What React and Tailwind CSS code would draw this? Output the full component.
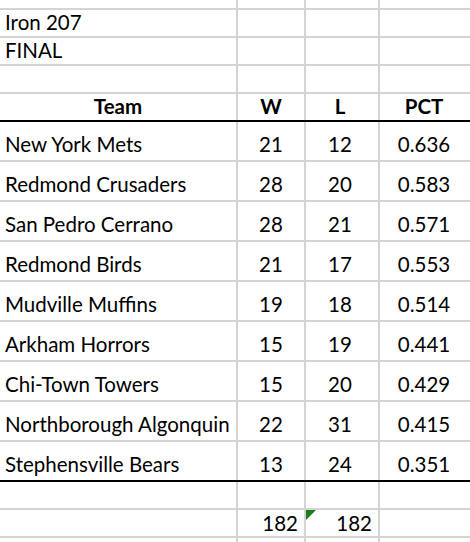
const teams = [
  ["New York Mets", 21, 12, "0.636"],
  ["Redmond Crusaders", 28, 20, "0.583"],
  ["San Pedro Cerrano", 28, 21, "0.571"],
  ["Redmond Birds", 21, 17, "0.553"],
  ["Mudville Muffins", 19, 18, "0.514"],
  ["Arkham Horrors", 15, 19, "0.441"],
  ["Chi-Town Towers", 15, 20, "0.429"],
  ["Northborough Algonquin", 22, 31, "0.415"],
  ["Stephensville Bears", 13, 24, "0.351"],
];

function Row({ h, pad = "pb-[2px]", line = "border-[#d4d4d4]", cells = [] }) {
  const [a, b, c, d] = cells;
  return (
    <div className={`flex border-b-2 ${line} ${h}`}>
      <div className={`w-[238px] shrink-0 border-r-2 border-[#d4d4d4] flex items-center pl-[5px] ${pad}`}>
        {a}
      </div>
      <div className={`w-[68px] shrink-0 border-r-2 border-[#d4d4d4] flex items-center justify-center ${pad}`}>
        {b}
      </div>
      <div className={`w-[74px] shrink-0 border-r-2 border-[#d4d4d4] flex items-center justify-center pr-[4px] ${pad}`}>
        {c}
      </div>
      <div className={`flex-1 flex items-center justify-center pr-[2px] ${pad}`}>{d}</div>
    </div>
  );
}

export default function App() {
  return (
    <div
      className="w-[470px] h-[542px] overflow-hidden bg-white text-black text-[20.5px] leading-none"
      style={{ fontFamily: "Lato, 'Liberation Sans', sans-serif" }}
    >
      <Row h="h-[10px]" pad="" />
      <Row h="h-[28px]" cells={["Iron 207"]} />
      <Row h="h-[28px]" cells={["FINAL"]} />
      <Row h="h-[28px]" />
      <div className="flex border-b-2 border-black h-[28px] font-bold">
        <div className="w-[238px] shrink-0 border-r-2 border-[#d4d4d4] flex items-center justify-center pb-[2px]">
          Team
        </div>
        <div className="w-[68px] shrink-0 border-r-2 border-[#d4d4d4] flex items-center justify-center pb-[2px]">
          W
        </div>
        <div className="w-[74px] shrink-0 border-r-2 border-[#d4d4d4] flex items-center justify-center pr-[4px] pb-[2px]">
          L
        </div>
        <div className="flex-1 flex items-center justify-center pr-[2px] pb-[2px]">PCT</div>
      </div>
      {teams.map((t, i) => (
        <Row
          key={t[0]}
          h="h-[40px]"
          pad="pt-[6px]"
          line={i === teams.length - 1 ? "border-black" : "border-[#d4d4d4]"}
          cells={t}
        />
      ))}
      <Row h="h-[28px]" />
      <div className="flex border-b-2 border-[#d4d4d4] h-[28px]">
        <div className="w-[238px] shrink-0 border-r-2 border-[#d4d4d4]" />
        <div className="w-[68px] shrink-0 border-r-2 border-[#d4d4d4] flex items-center justify-end pr-[6px]">
          182
        </div>
        <div className="relative w-[74px] shrink-0 border-r-2 border-[#d4d4d4] flex items-center justify-end pr-[6px]">
          <span className="absolute left-0 top-0 w-0 h-0 border-t-[10px] border-r-[10px] border-t-[#1a7f1a] border-r-transparent" />
          182
        </div>
        <div className="flex-1" />
      </div>
      <Row h="h-[10px]" pad="" />
    </div>
  );
}
